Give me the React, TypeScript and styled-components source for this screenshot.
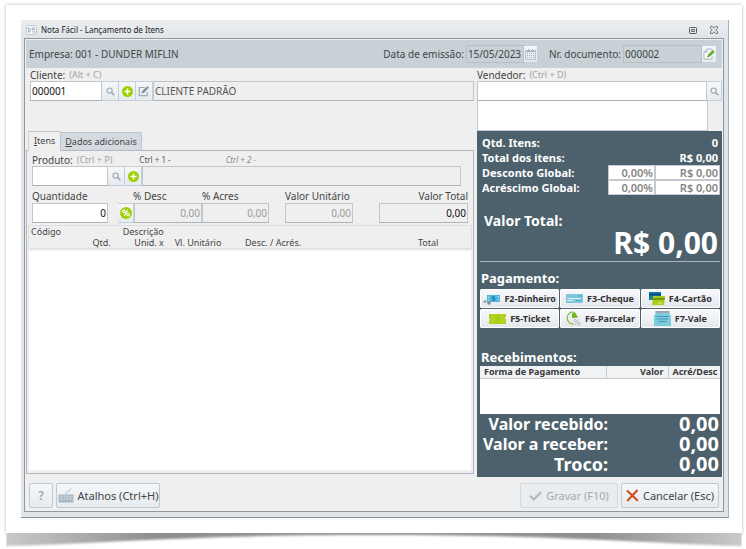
import React from "react";
import styled, { createGlobalStyle, css } from "styled-components";

const GlobalStyle = createGlobalStyle`
  *, *::before, *::after { box-sizing: border-box; }
  body {
    margin: 0;
    background: #fff;
    color: #454545;
    font: 10px/14px "Noto Sans", "Open Sans", sans-serif;
  }
  button, input, textarea { font: inherit; color: inherit; margin: 0; border-radius: 0; }
  svg { display: block; flex: none; }
`;

const Page = styled.div`
  min-height: 100vh;
  padding: 5px 4px 0 6px;
  display: flex;
  flex-direction: column;
`;

const Card = styled.div`
  flex: 1;
  display: flex;
  padding: 15px 13px 15px 15px;
  background: #fff;
  box-shadow: 0 0 3px rgba(0, 0, 0, 0.3);
`;

const CurlShadow = styled.svg`
  width: 100%;
  height: 16px;
`;

const Window = styled.main`
  flex: 1;
  min-width: 0;
  display: flex;
  flex-direction: column;
  background: #e1e5e9;
  border-right: 1px solid #a9b0b6;
  border-bottom: 1px solid #87929b;
`;

const TitleBar = styled.header`
  height: 18px;
  padding: 2px 10px 0 5px;
  display: flex;
  align-items: center;
  gap: 4px;
  background: linear-gradient(#eceef2, #e0e4e8);
`;

const Title = styled.h1`
  flex: 1;
  margin: 0;
  font-size: 8px;
  font-weight: 400;
  color: #222;
`;

const WindowControls = styled.div`
  display: flex;
  gap: 13px;
`;

const BareButton = styled.button`
  padding: 0;
  border: 0;
  background: none;
`;

const Frame = styled.div`
  flex: 1;
  margin: 0 4px 5px 3px;
  padding: 1px;
  display: flex;
  flex-direction: column;
  border: 1px solid #8e989f;
  background: #efefef;
`;

const DocumentBar = styled.div`
  height: 28px;
  padding: 0 5px 0 3px;
  display: flex;
  align-items: center;
  background: #c7d1d6;
  white-space: nowrap;
`;

const Company = styled.div`
  flex: 1;
`;

const Body = styled.div`
  flex: 1;
  display: grid;
  grid-template-columns: minmax(0, 1fr) 245px;
  column-gap: 3px;
`;

const Column = styled.section`
  display: flex;
  flex-direction: column;
  min-width: 0;
`;

const LabelRow = styled.div<{ $inset?: number }>`
  height: 13px;
  padding-left: ${(p) => p.$inset ?? 0}px;
  display: flex;
  align-items: center;
  white-space: nowrap;
`;

const Hint = styled.span<{ $strong?: boolean; $italic?: boolean }>`
  font-size: ${(p) => (p.$strong || p.$italic ? 8 : 9)}px;
  color: ${(p) => (p.$strong ? "#555" : p.$italic ? "#888" : "#a2a2a2")};
  font-style: ${(p) => (p.$italic ? "italic" : "normal")};
  margin-left: 4px;
`;

const FieldRow = styled.div<{ $inset?: number }>`
  height: 20px;
  margin-left: ${(p) => p.$inset ?? 0}px;
  display: flex;
`;

const TextBox = styled.input<{ $width?: number; $muted?: boolean; $right?: boolean }>`
  ${(p) =>
    p.$width
      ? css`
          flex: none;
          width: ${p.$width}px;
        `
      : css`
          flex: 1;
          min-width: 0;
        `}
  height: 100%;
  padding: 0 1px;
  border: 1px solid #bfc6cc;
  border-bottom-color: #aab4bc;
  outline: 0;
  background: ${(p) => (p.readOnly || p.disabled ? "#efefef" : "#fff")};
  color: ${(p) => (p.$muted ? "#9a9a9a" : p.readOnly ? "#555" : "#111")};
  text-align: ${(p) => (p.$right ? "right" : "left")};
`;

const BarBox = styled(TextBox)`
  height: 18px;
  margin-left: 2px;
  background: #c7d1d6;
  border-color: #b5bfc5;
  color: #444;
`;

const IconButton = styled.button<{ $width?: number }>`
  flex: none;
  width: ${(p) => p.$width ?? 17}px;
  height: 100%;
  padding: 0;
  display: flex;
  align-items: center;
  justify-content: center;
  border: 1px solid #c6cfd7;
  border-left-width: 0;
  background: linear-gradient(#f5f7f9, #e6ebf0);
`;

const BarButton = styled(IconButton)`
  height: 18px;
`;

const DocumentLabel = styled.label`
  margin-left: 11px;
`;

const SellerNotes = styled.textarea`
  width: calc(100% - 14px);
  height: 30px;
  padding: 2px;
  display: block;
  resize: none;
  border: 1px solid #c3cad0;
  border-top: 0;
  outline: 0;
  background: #fff;
`;

const Tabs = styled.div`
  margin: 30px 0 -1px 2px;
  display: flex;
  align-items: flex-end;
  position: relative;
`;

const Tab = styled.button<{ $active?: boolean }>`
  height: ${(p) => (p.$active ? 20 : 19)}px;
  padding: 0 ${(p) => (p.$active ? 5 : 4)}px;
  font-size: 9px;
  border: 1px solid #bcc4cc;
  border-left-color: ${(p) => (p.$active ? "#cdd3d9" : "#bcc4cc")};
  border-bottom-color: ${(p) => (p.$active ? "#efefef" : "#b3b9c2")};
  border-right-width: ${(p) => (p.$active ? 0 : 1)}px;
  background: ${(p) => (p.$active ? "#efefef" : "#d5dae0")};
`;

const TabPanel = styled.div`
  flex: 1;
  margin: 0 0 3px;
  padding: 1px 1px 3px;
  display: flex;
  flex-direction: column;
  border: 1px solid #b3b6c0;
`;

const ProductLabels = styled(LabelRow)`
  padding: 1px 0 0 4px;
  height: 14px;
`;

const FirstShortcut = styled(Hint)`
  margin-left: 27px;
`;

const SecondShortcut = styled(Hint)`
  margin-left: 55px;
`;

const ProductRow = styled(FieldRow)`
  margin: 0 11px 0 4px;
`;

const Amounts = styled.div`
  margin: 3px 4px 2px;
  display: flex;
`;

const AmountField = styled.div<{ $width: number; $gap?: number; $push?: boolean; $labelInset?: number }>`
  flex: none;
  width: ${(p) => p.$width}px;
  margin-left: ${(p) => (p.$push ? "auto" : `${p.$gap ?? 0}px`)};
  label {
    display: block;
    padding-left: ${(p) => p.$labelInset ?? 0}px;
    text-align: ${(p) => (p.$push ? "right" : "left")};
    white-space: nowrap;
  }
`;

const ItemsTable = styled.table`
  width: 100%;
  border-collapse: collapse;
  table-layout: fixed;
  font-size: 9px;
  line-height: 11px;
  border: 1px solid #dbe0e6;
  th {
    padding: 0 2px;
    font-weight: 400;
    text-align: right;
    white-space: nowrap;
  }
  th[data-start] {
    text-align: left;
  }
`;

const ItemsArea = styled.div`
  flex: 1;
  min-height: 120px;
  margin: 2px 1px 0;
  background: #fff;
`;

const Totals = styled.section`
  flex: 1;
  padding: 4px 2px 0 3px;
  display: flex;
  flex-direction: column;
  background: #4d616c;
  color: #fff;
  font-weight: 700;
`;

const SummaryRow = styled.div`
  height: 15px;
  padding-left: 2px;
  display: flex;
  align-items: center;
  justify-content: space-between;
  font-size: 11px;
`;

const SummaryValue = styled.span`
  padding-right: 2px;
`;

const PairedInputs = styled.div`
  display: flex;
  height: 100%;
`;

const GlobalInput = styled.input<{ $width: number }>`
  width: ${(p) => p.$width}px;
  height: 100%;
  padding: 0 1px;
  border: 1px solid #c3c9cf;
  outline: 0;
  background: #fff;
  color: #858585;
  font-weight: 600;
  text-align: right;
`;

const GrandLabel = styled.div`
  margin-top: 17px;
  padding-left: 4px;
  font-size: 14px;
  line-height: 18px;
`;

const GrandValue = styled.div`
  padding-right: 2px;
  font-size: 30px;
  line-height: 26px;
  text-align: right;
`;

const Divider = styled.hr`
  width: 100%;
  margin: 5px 0 7px;
  border: 0;
  border-top: 1px solid #aab4ba;
`;

const SectionTitle = styled.h2`
  margin: 0;
  padding-left: 1px;
  font-size: 13px;
  line-height: 18px;
`;

const Payments = styled.div`
  margin: 2px 0 20px;
  display: grid;
  grid-template-columns: repeat(3, 1fr);
  gap: 1px;
`;

const PaymentButton = styled.button`
  height: 19px;
  padding: 0 2px;
  display: flex;
  align-items: center;
  justify-content: center;
  gap: 4px;
  border: 1px solid #fff;
  border-radius: 1px;
  background: linear-gradient(#f7f8fa, #e4e8ee);
  color: #333;
  font-size: 9px;
  font-weight: 700;
  white-space: nowrap;
`;

const Receipts = styled.div`
  flex: 1;
  min-height: 40px;
  background: #fff;
`;

const ReceiptsTable = styled.table`
  width: 100%;
  border-collapse: collapse;
  table-layout: fixed;
  color: #3a3a3a;
  font-size: 9px;
  line-height: 12px;
  background: #f0f2f4;
  th {
    padding: 0 4px;
    border-right: 1px solid #c4cad0;
    border-bottom: 1px solid #c4cad0;
    text-align: right;
    white-space: nowrap;
  }
  th:first-child {
    text-align: left;
  }
  th:last-child {
    border-right: 0;
  }
`;

const Results = styled.dl`
  margin: 0;
  display: grid;
  grid-template-columns: 128px 1fr;
  line-height: 20px;
  padding-bottom: 3px;
  dt,
  dd {
    margin: 0;
    text-align: right;
    white-space: nowrap;
  }
  dt {
    font-size: 16px;
  }
  dt:last-of-type {
    font-size: 18px;
  }
  dd {
    padding-right: 1px;
    font-size: 20px;
  }
`;

const Footer = styled.footer`
  margin-top: 1px;
  height: 32px;
  padding: 3px 3px 0;
  display: flex;
  align-items: center;
  gap: 3px;
`;

const FooterSpacer = styled.div`
  flex: 1;
`;

const ActionButton = styled.button<{ $width: number }>`
  width: ${(p) => p.$width}px;
  height: 25px;
  padding: 0;
  display: flex;
  align-items: center;
  justify-content: center;
  gap: 4px;
  border: 1px solid #c0c9d1;
  border-radius: 2px;
  background: linear-gradient(#f5f8fa, #e5ebf0);
  color: #444;
  font-size: 11px;
  white-space: nowrap;
  &:disabled {
    color: #a5a9ac;
    background: #e9edf0;
    border-color: #d2d9de;
  }
`;

const HelpMark = styled.span`
  color: #98a8b2;
  font-size: 12px;
  font-weight: 600;
`;

const SearchIcon = () => (
  <svg width="9" height="9" viewBox="0 0 9 9" fill="none" stroke="#9aa9b2">
    <circle cx="3.6" cy="3.6" r="2.6" strokeWidth="1.1" />
    <path d="M5.6 5.6 8.3 8.3" strokeWidth="1.6" />
  </svg>
);

const PlusIcon = () => (
  <svg width="11" height="11" viewBox="0 0 11 11">
    <circle cx="5.5" cy="5.5" r="5.5" fill="#9bd003" />
    <path d="M5.5 2.5v6M2.5 5.5h6" stroke="#fff" strokeWidth="1.5" />
  </svg>
);

const PercentIcon = () => (
  <svg width="12" height="12" viewBox="0 0 11 11" fill="none" stroke="#fff">
    <circle cx="5.5" cy="5.5" r="5.5" fill="#9bd003" stroke="none" />
    <circle cx="3.6" cy="4.1" r="1.2" />
    <circle cx="7.4" cy="6.9" r="1.2" />
    <path d="M7.2 2.8 3.8 8.2" />
  </svg>
);

const EditIcon = () => (
  <svg width="12" height="12" viewBox="0 0 12 12" fill="none">
    <path d="M6.5 2.5H1.3v8.2h8V7" stroke="#9fadb5" strokeWidth="1.2" />
    <path d="m3.4 8.6.8-2.6 5-5 1.8 1.8-5 5z" fill="#7d919c" />
    <path d="m8 2.2 1.8 1.8" stroke="#eef1f4" strokeWidth=".6" />
  </svg>
);

const CalendarIcon = () => (
  <svg width="11" height="11" viewBox="0 0 11 11" fill="none" stroke="#a5b1b8">
    <rect x=".5" y="1.5" width="10" height="9" fill="#e9eef1" stroke="#b9c3c9" />
    <path d="M1 2.5h9" />
    <path d="M2 4.5h8M2 6.5h8M2 8.5h8" strokeDasharray="1 1" />
    <path d="M3.5 0v2M7.5 0v2" />
  </svg>
);

const NoteIcon = () => (
  <svg width="12" height="12" viewBox="0 0 12 12" fill="none">
    <path d="M4 1h5v2M9 8v3H1V4l3-3v3H1" fill="#fff" stroke="#a9b6bc" />
    <path d="m4.3 9.3.7-2.6 4.8-4.6L11.7 4 6.8 8.5z" fill="#64ad32" />
    <path d="m4.3 9.3.4-1.3.9.9z" fill="#385f24" />
  </svg>
);

const AppIcon = () => (
  <svg width="11" height="10" viewBox="0 0 11 10" fill="none" stroke="#a4b0b7">
    <rect x=".5" y=".5" width="10" height="9" rx="1" fill="#f8fafb" stroke="#c1cad0" />
    <path d="M2.5 2.4v5.2L5 5zM9 1.8 6.8 4.4M6.2 1.8v2.8h3M6 6l3 2.6M8 5.8l1.4 1" />
  </svg>
);

const RestoreIcon = () => (
  <svg width="8" height="7" viewBox="0 0 8 7" fill="none" stroke="#555b60">
    <rect x=".5" y=".5" width="7" height="6" rx=".8" />
    <rect x="2.7" y="2.5" width="2.6" height="2" strokeWidth=".9" />
  </svg>
);

const CloseIcon = () => (
  <svg width="8" height="8" viewBox="0 0 8 8" fill="none" stroke="#5b6166" strokeWidth=".8">
    <path d="M.5.5h2L4 2.2 5.5.5h2v2L5.8 4l1.7 1.5v2h-2L4 5.8 2.5 7.5h-2v-2L2.2 4 .5 2.5z" />
  </svg>
);

const CashIcon = () => (
  <svg width="17" height="12" viewBox="0 0 17 12">
    <path d="M4 2h13v7H4z" fill="#4db5dc" />
    <path d="M7 3.4H5.4v4.2H7M14 3.4h1.6v4.2H14" fill="none" stroke="#8fd2ec" />
    <path d="M11.7 3.8H9.5v1.6h2v1.8H9.2" fill="none" stroke="#13749f" />
    <circle cx="2" cy="8.5" r="1.6" fill="#95a4ac" />
    <circle cx="6" cy="9.9" r="1.8" fill="#7f9099" />
  </svg>
);

const ChequeIcon = () => (
  <svg width="17" height="9" viewBox="0 0 17 9">
    <path d="M0 0h17v9H0z" fill="#80c6df" />
    <path d="M1.5 4.5h13M1.5 6.5h6" stroke="#dff2f9" />
    <path d="M12 2h3.5M10 6.5h5" stroke="#4aa2c4" />
  </svg>
);

const CardsIcon = () => (
  <svg width="16" height="13" viewBox="0 0 16 13">
    <path d="M0 0h12v8H0z" fill="#1678ad" />
    <path d="M0 1.6h12v1.8H0z" fill="#064a73" />
    <path d="M4 4h12l-1 9H3z" fill="#a9ce1a" />
    <path d="m3.8 6 12-.3-.2 2-12 .3z" fill="#6c9a0d" />
    <path d="M9.5 11H13" stroke="#e5f2a0" />
  </svg>
);

const TicketIcon = () => (
  <svg width="17" height="10" viewBox="0 0 17 10">
    <path d="M0 0h17v2.6L15.8 4 17 5.4V10H0V7.2L1.2 5.8 0 4.4z" fill="#aed11b" />
    <path d="M4 0v10M13 0v10" stroke="#c9e35c" strokeDasharray="1 1" />
    <path d="m8.5 2 .9 2h2L9.8 5.3l.6 2.2-1.9-1.3-1.9 1.3.6-2.2L5.6 4h2z" fill="#a2c714" />
  </svg>
);

const InstallmentIcon = () => (
  <svg width="16" height="15" viewBox="0 0 16 15" fill="none">
    <path d="M8.5 13A6 6 0 1 1 8 .9" stroke="#86c435" strokeWidth="1.3" />
    <path d="M7 7V3l2.4-2.6 3.7 6.1z" fill="#6fb522" />
    <circle cx="10.2" cy="9.5" r="1.2" stroke="#b4bec3" />
    <circle cx="14" cy="12.8" r="1.2" stroke="#b4bec3" />
    <path d="m14 8.2-4 5.8" stroke="#b4bec3" />
  </svg>
);

const VoucherIcon = () => (
  <svg width="17" height="15" viewBox="0 0 17 15">
    <path d="M1.5 0h14v3h-14z" fill="#98a9b1" />
    <path d="M0 4h1.5V2h14v2H17v11H0z" fill="#80cade" />
    <path d="M2.5 5.5h12M2.5 8h12M4.5 10.5h8" stroke="#3a9bb8" />
  </svg>
);

const KeyboardIcon = () => (
  <svg width="16" height="15" viewBox="0 0 16 15" fill="none">
    <path d="M8 6.5C8 3 9 4.5 11 3c1-.9.5-2 2.5-2.4" stroke="#b5c0c6" />
    <path d="M.5 6.5h15v8H.5z" fill="#a9b8c0" />
    <path d="M1 9h14M1 11.5h14M3.5 7v4.5M6.5 7v4.5M9.5 7v4.5M12.5 7v4.5" stroke="#d3dce1" strokeWidth=".6" />
  </svg>
);

const CheckIcon = () => (
  <svg width="13" height="10" viewBox="0 0 13 10" fill="none">
    <path d="m1 4.8 3.7 3.7L12 1.2" stroke="#b4b8bb" strokeWidth="2.2" />
  </svg>
);

const CrossIcon = () => (
  <svg width="13" height="13" viewBox="0 0 13 13" fill="none">
    <path d="m1 1.5 10.8 10.3M11.5 1 1.2 12" stroke="#d1501f" strokeWidth="2.2" />
  </svg>
);

const payments = [
  { label: "F2-Dinheiro", Icon: CashIcon },
  { label: "F3-Cheque", Icon: ChequeIcon },
  { label: "F4-Cartão", Icon: CardsIcon },
  { label: "F5-Ticket", Icon: TicketIcon },
  { label: "F6-Parcelar", Icon: InstallmentIcon },
  { label: "F7-Vale", Icon: VoucherIcon },
];

const globals = [
  { id: "desconto", label: "Desconto Global:" },
  { id: "acrescimo", label: "Acréscimo Global:" },
];

const results = ["Valor recebido:", "Valor a receber:", "Troco:"];

export default function App() {
  return (
    <Page>
      <GlobalStyle />
      <Card>
        <Window>
          <TitleBar>
            <AppIcon />
            <Title>Nota Fácil - Lançamento de Itens</Title>
            <WindowControls>
              <BareButton aria-label="Restaurar"><RestoreIcon /></BareButton>
              <BareButton aria-label="Fechar"><CloseIcon /></BareButton>
            </WindowControls>
          </TitleBar>
          <Frame>
            <DocumentBar>
              <Company>Empresa: 001 - DUNDER MIFLIN</Company>
              <label htmlFor="data">Data de emissão:</label>
              <BarBox id="data" $width={58} defaultValue="15/05/2023" />
              <BarButton $width={14} aria-label="Calendário"><CalendarIcon /></BarButton>
              <DocumentLabel htmlFor="documento">Nr. documento:</DocumentLabel>
              <BarBox id="documento" $width={79} defaultValue="000002" />
              <BarButton $width={15} aria-label="Editar documento"><NoteIcon /></BarButton>
            </DocumentBar>
            <Body>
              <Column>
                <LabelRow $inset={4}>
                  <label htmlFor="cliente">Cliente:</label>
                  <Hint>(Alt + C)</Hint>
                </LabelRow>
                <FieldRow $inset={4}>
                  <TextBox id="cliente" $width={72} defaultValue="000001" />
                  <IconButton aria-label="Pesquisar cliente"><SearchIcon /></IconButton>
                  <IconButton aria-label="Adicionar cliente"><PlusIcon /></IconButton>
                  <IconButton aria-label="Editar cliente"><EditIcon /></IconButton>
                  <TextBox aria-label="Nome do cliente" readOnly value="CLIENTE PADRÃO" />
                </FieldRow>
                <Tabs role="tablist">
                  <Tab role="tab" aria-selected $active><u>I</u>tens</Tab>
                  <Tab role="tab" aria-selected={false}><u>D</u>ados adicionais</Tab>
                </Tabs>
                <TabPanel role="tabpanel">
                  <ProductLabels>
                    <label htmlFor="produto">Produto:</label>
                    <Hint>(Ctrl + P)</Hint>
                    <FirstShortcut $strong>Ctrl + 1 -</FirstShortcut>
                    <SecondShortcut $italic>Ctrl + 2 -</SecondShortcut>
                  </ProductLabels>
                  <ProductRow>
                    <TextBox id="produto" $width={76} />
                    <IconButton aria-label="Pesquisar produto"><SearchIcon /></IconButton>
                    <IconButton aria-label="Adicionar produto"><PlusIcon /></IconButton>
                    <TextBox aria-label="Descrição do produto" readOnly />
                  </ProductRow>
                  <Amounts>
                    <AmountField $width={76}>
                      <label htmlFor="quantidade">Quantidade</label>
                      <FieldRow><TextBox id="quantidade" $right defaultValue="0" /></FieldRow>
                    </AmountField>
                    <AmountField $width={84} $gap={10} $labelInset={15}>
                      <label htmlFor="desc">% Desc</label>
                      <FieldRow>
                        <IconButton $width={16} aria-label="Percentual"><PercentIcon /></IconButton>
                        <TextBox id="desc" disabled $muted $right defaultValue="0,00" />
                      </FieldRow>
                    </AmountField>
                    <AmountField $width={67}>
                      <label htmlFor="acres">% Acres</label>
                      <FieldRow><TextBox id="acres" disabled $muted $right defaultValue="0,00" /></FieldRow>
                    </AmountField>
                    <AmountField $width={68} $gap={16}>
                      <label htmlFor="unitario">Valor Unitário</label>
                      <FieldRow><TextBox id="unitario" disabled $muted $right defaultValue="0,00" /></FieldRow>
                    </AmountField>
                    <AmountField $width={89} $push>
                      <label htmlFor="total">Valor Total</label>
                      <FieldRow><TextBox id="total" disabled $right defaultValue="0,00" /></FieldRow>
                    </AmountField>
                  </Amounts>
                  <ItemsTable>
                    <colgroup>
                      <col width="19%" />
                      <col width="12%" />
                      <col width="13%" />
                      <col width="18%" />
                      <col width="31%" />
                      <col width="7%" />
                    </colgroup>
                    <thead>
                      <tr>
                        <th data-start>Código</th>
                        <th>Descrição</th>
                        <th colSpan={4} />
                      </tr>
                      <tr>
                        <th>Qtd.</th>
                        <th>Unid. x</th>
                        <th>Vl. Unitário</th>
                        <th>Desc. / Acrés.</th>
                        <th>Total</th>
                        <th />
                      </tr>
                    </thead>
                  </ItemsTable>
                  <ItemsArea />
                </TabPanel>
              </Column>
              <Column>
                <LabelRow>
                  <label htmlFor="vendedor">Vendedor:</label>
                  <Hint>(Ctrl + D)</Hint>
                </LabelRow>
                <FieldRow>
                  <TextBox id="vendedor" />
                  <IconButton $width={15} aria-label="Pesquisar vendedor"><SearchIcon /></IconButton>
                </FieldRow>
                <SellerNotes aria-label="Vendedores" />
                <Totals>
                  <SummaryRow>
                    <span>Qtd. Itens:</span>
                    <SummaryValue>0</SummaryValue>
                  </SummaryRow>
                  <SummaryRow>
                    <span>Total dos itens:</span>
                    <SummaryValue>R$ 0,00</SummaryValue>
                  </SummaryRow>
                  {globals.map((g) => (
                    <SummaryRow key={g.id}>
                      <label htmlFor={g.id}>{g.label}</label>
                      <PairedInputs>
                        <GlobalInput id={g.id} $width={47} defaultValue="0,00%" />
                        <GlobalInput aria-label={`${g.label} valor`} $width={65} defaultValue="R$ 0,00" />
                      </PairedInputs>
                    </SummaryRow>
                  ))}
                  <GrandLabel>Valor Total:</GrandLabel>
                  <GrandValue>R$ 0,00</GrandValue>
                  <Divider />
                  <SectionTitle>Pagamento:</SectionTitle>
                  <Payments>
                    {payments.map(({ label, Icon }) => (
                      <PaymentButton key={label}>
                        <Icon />
                        {label}
                      </PaymentButton>
                    ))}
                  </Payments>
                  <SectionTitle>Recebimentos:</SectionTitle>
                  <Receipts>
                    <ReceiptsTable>
                      <colgroup>
                        <col />
                        <col width="62" />
                        <col width="52" />
                      </colgroup>
                      <thead>
                        <tr>
                          <th>Forma de Pagamento</th>
                          <th>Valor</th>
                          <th>Acré/Desc</th>
                        </tr>
                      </thead>
                    </ReceiptsTable>
                  </Receipts>
                  <Results>
                    {results.map((label) => (
                      <React.Fragment key={label}>
                        <dt>{label}</dt>
                        <dd>0,00</dd>
                      </React.Fragment>
                    ))}
                  </Results>
                </Totals>
              </Column>
            </Body>
            <Footer>
              <ActionButton $width={24} aria-label="Ajuda"><HelpMark>?</HelpMark></ActionButton>
              <ActionButton $width={104}><KeyboardIcon />Atalhos (Ctrl+H)</ActionButton>
              <FooterSpacer />
              <ActionButton $width={98} disabled><CheckIcon />Gravar (F10)</ActionButton>
              <ActionButton $width={98}><CrossIcon />Cancelar (Esc)</ActionButton>
            </Footer>
          </Frame>
        </Window>
      </Card>
      <CurlShadow viewBox="0 0 736 16" preserveAspectRatio="none">
        <defs>
          <linearGradient id="curl">
            <stop offset="0" stopColor="#c9c9c9" />
            <stop offset=".2" stopColor="#8f8f8f" />
            <stop offset=".5" stopColor="#979797" />
            <stop offset=".8" stopColor="#8f8f8f" />
            <stop offset="1" stopColor="#c9c9c9" />
          </linearGradient>
          <filter id="soft" x="-2%" y="-20%" width="104%" height="140%">
            <feGaussianBlur stdDeviation="1" />
          </filter>
        </defs>
        <path d="M0-3h736v16C650 11 560 2 368 2S90 11 0 13z" fill="url(#curl)" filter="url(#soft)" />
      </CurlShadow>
    </Page>
  );
}
